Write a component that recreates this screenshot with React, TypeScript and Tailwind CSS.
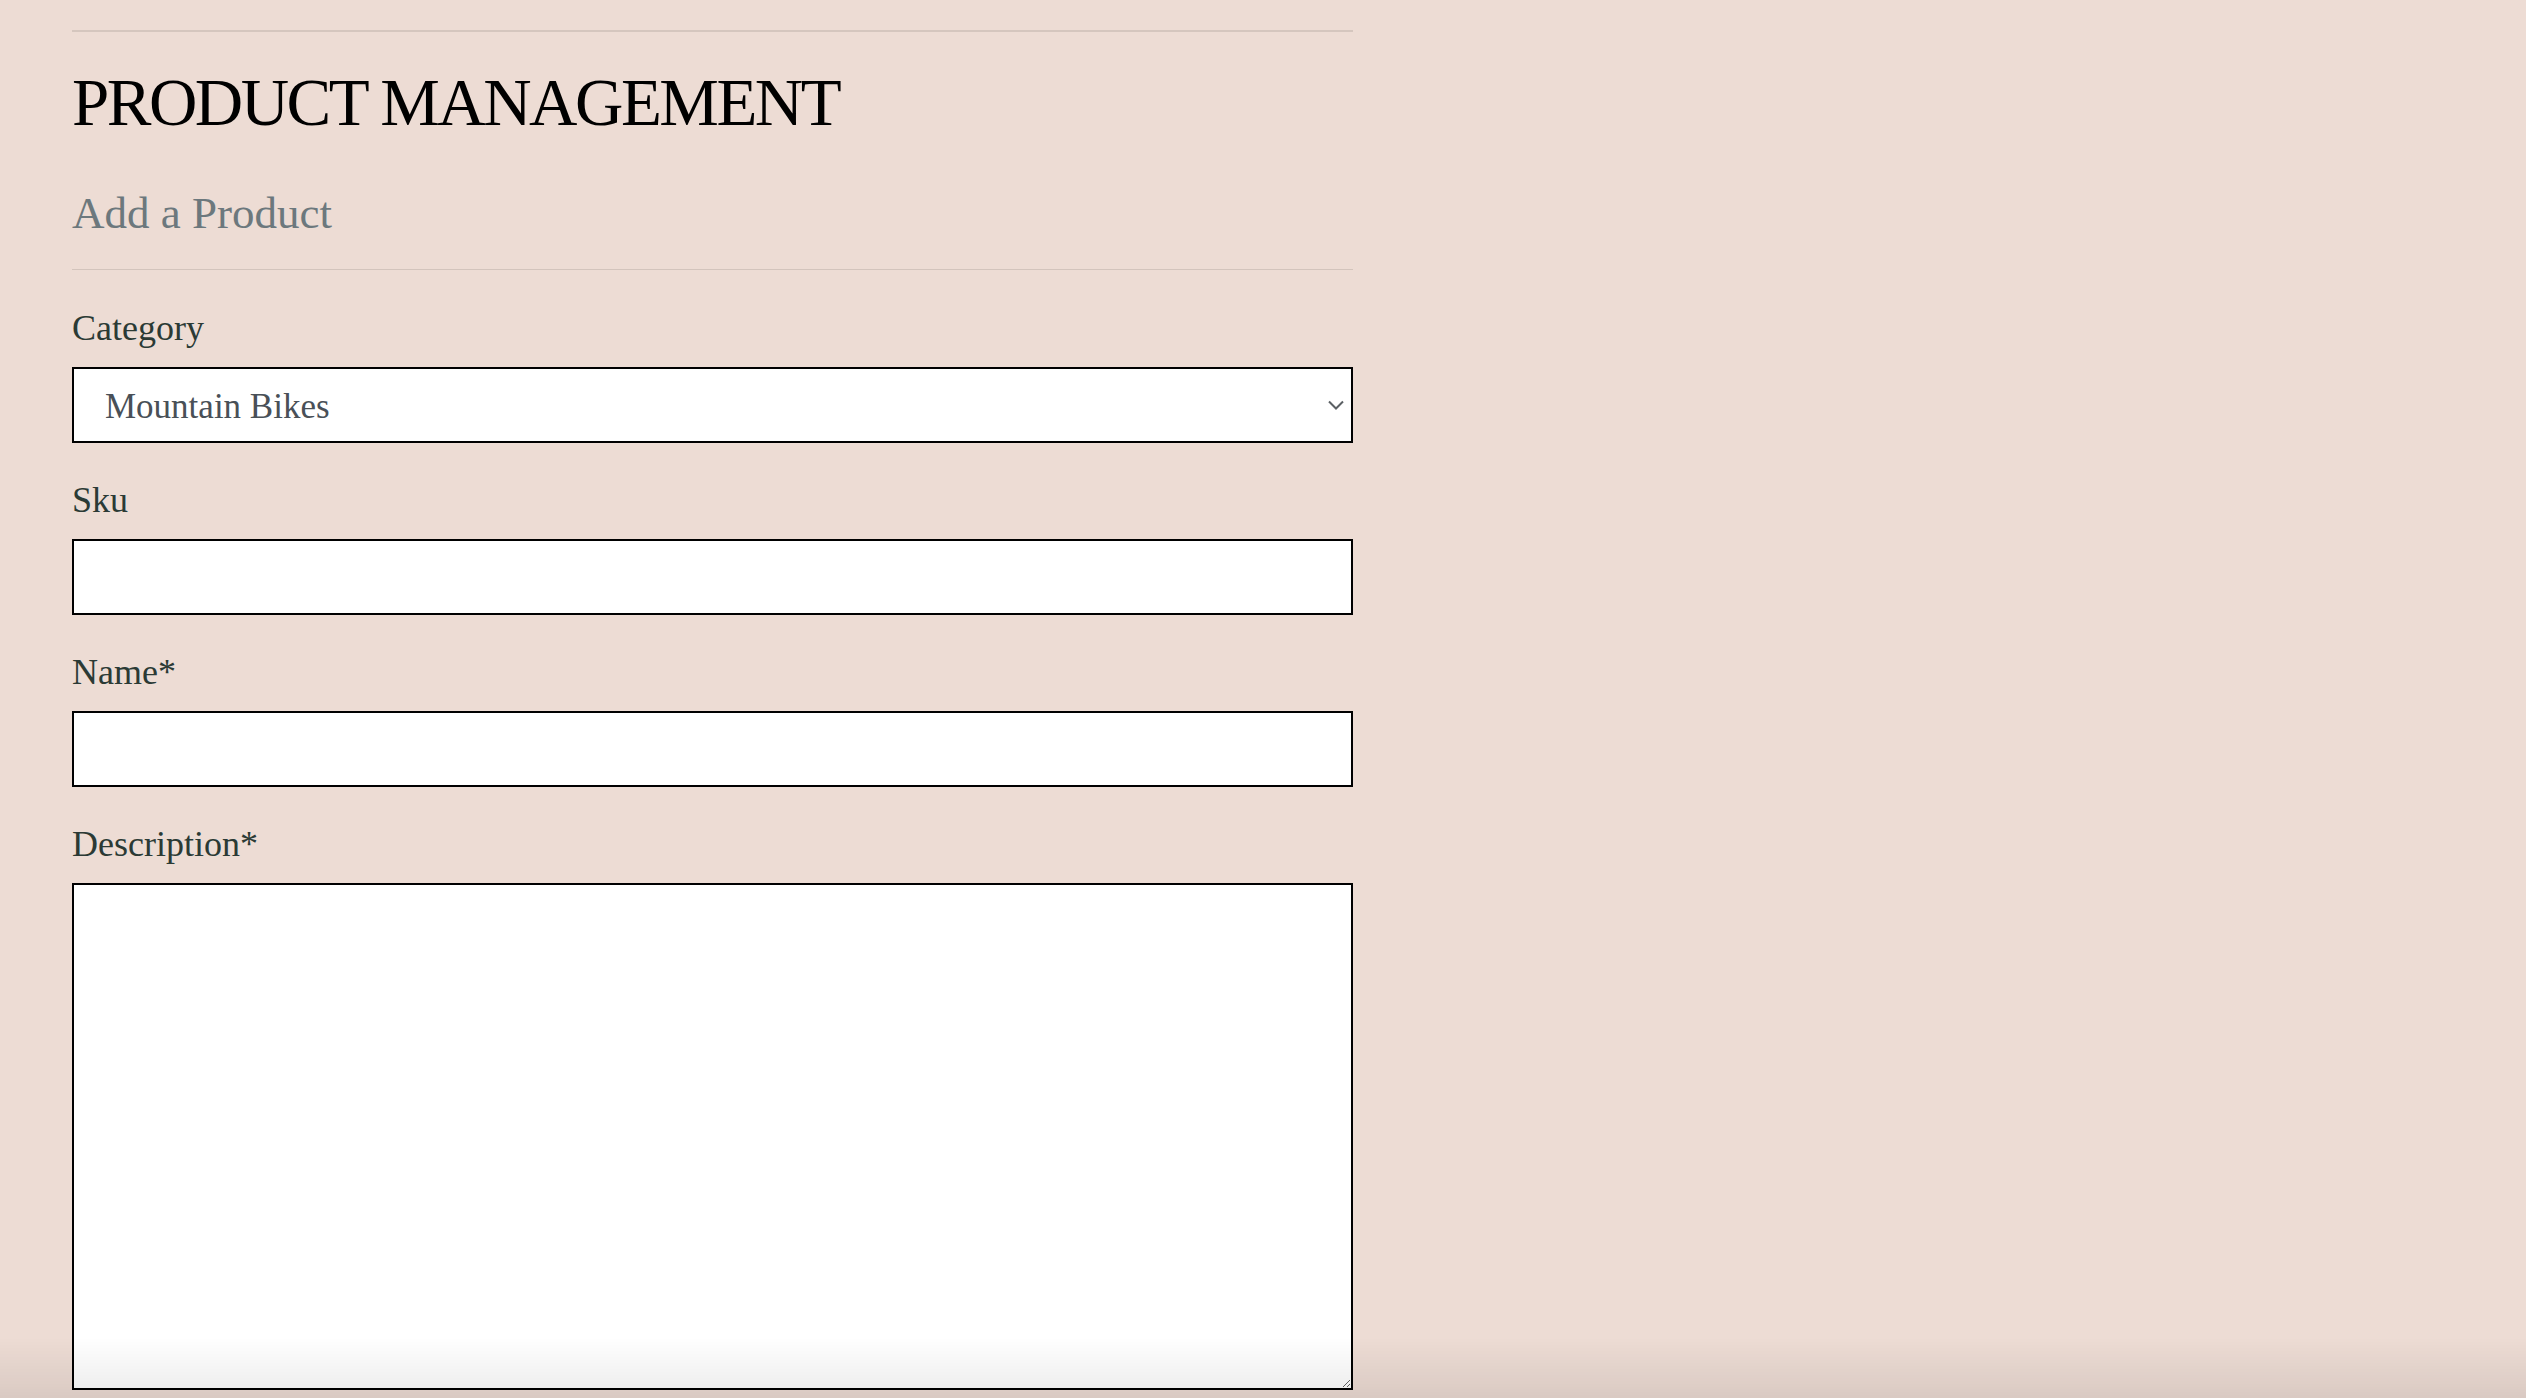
import React from "react";

function Field({ label, children }: { label: string; children: React.ReactNode }) {
  return (
    <div className="mb-[27px]">
      <label className="block pt-[3px] text-[36px] leading-[54px] text-[#2b3a35]">{label}</label>
      <div className="mt-[12px]">{children}</div>
    </div>
  );
}

export default function App() {
  return (
    <div className="min-h-screen bg-[#eddcd4] font-['Liberation_Serif','Times_New_Roman',serif]">
      <div className="pl-[72px] pt-[30px] w-[1353px]">
        <div className="h-[2px] bg-[#d5c6be]" />
        <h1 className="mt-[35px] text-[67px] leading-[70px] tracking-[-2.5px] text-black">PRODUCT MANAGEMENT</h1>
        <h2 className="mt-[49px] text-[45px] leading-[54px] text-[#6c787d]">Add a Product</h2>
        <div className="mt-[29px] h-px bg-[#d3c4bc]" />
        <form className="mt-[28px]">
          <Field label="Category">
            <div className="relative">
              <select
                defaultValue="mountain"
                className="block w-full h-[76px] appearance-none border-2 border-black bg-white pl-[31px] pt-[5px] text-[35px] text-[#495057] outline-none rounded-none font-['Liberation_Serif',serif]"
              >
                <option value="mountain">Mountain Bikes</option>
                <option value="road">Road Bikes</option>
              </select>
              <svg
                className="pointer-events-none absolute right-[9px] top-[33px]"
                width="16"
                height="10"
                viewBox="0 0 16 10"
                fill="none"
              >
                <path d="M1 1.5 L8 8.5 L15 1.5" stroke="#5b6064" strokeWidth="2" />
              </svg>
            </div>
          </Field>
          <Field label="Sku">
            <input type="text" className="block w-full h-[76px] border-2 border-black bg-white outline-none" />
          </Field>
          <Field label="Name*">
            <input type="text" className="block w-full h-[76px] border-2 border-black bg-white outline-none" />
          </Field>
          <Field label="Description*">
            <textarea className="block w-full h-[507px] border-2 border-black bg-white outline-none" />
          </Field>
        </form>
      </div>
      <div className="pointer-events-none fixed inset-x-0 bottom-0 h-[60px] bg-gradient-to-b from-transparent to-black/[0.08]" />
    </div>
  );
}
